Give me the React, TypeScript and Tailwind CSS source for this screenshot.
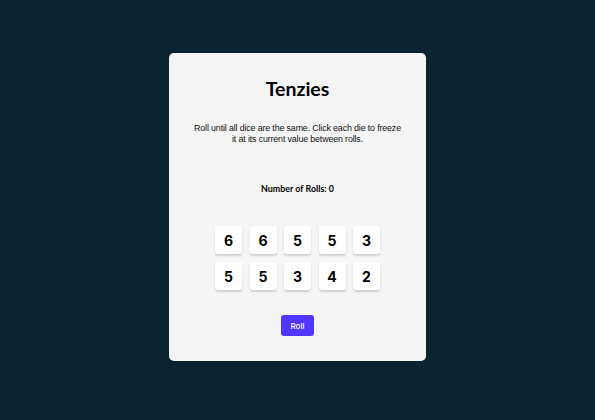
import React from "react";

const dice = [6, 6, 5, 5, 3, 5, 5, 3, 4, 2];

export default function App() {
  return (
    <div className="w-[595px] h-[420px] bg-[#0B2434] pt-[53px]">
      <main className="mx-auto w-[257px] h-[308px] bg-[#F5F5F5] rounded-[5px] flex flex-col items-center">
        <h1 className="mt-[25px] text-[19.5px] leading-[22px] font-bold text-black [font-family:Lato,sans-serif]">
          Tenzies
        </h1>
        <p className="mt-[23px] w-[210px] text-center text-[8.9px] leading-[10.5px] tracking-[-0.15px] text-[#111] [font-family:'Liberation_Sans',Arial,sans-serif]">
          Roll until all dice are the same. Click each die to freeze it at its current value between rolls.
        </p>
        <p className="mt-[39px] text-[8.9px] leading-[12px] font-bold text-black [font-family:Lato,sans-serif]">
          Number of Rolls: 0
        </p>
        <div className="mt-[31px] grid grid-cols-5 gap-x-[7.5px] gap-y-[8px]">
          {dice.map((d, i) => (
            <button
              key={i}
              className="w-[27px] h-[28px] bg-white rounded-[3px] shadow-[0_2px_2px_rgba(0,0,0,0.15)] flex items-center justify-center text-[14px] font-bold text-black [font-family:Inter,sans-serif]"
            >
              {d}
            </button>
          ))}
        </div>
        <button className="mt-[25px] w-[33px] h-[21px] bg-[#5035FF] rounded-[3px] text-white text-[8px] font-medium [font-family:Inter,sans-serif]">
          Roll
        </button>
      </main>
    </div>
  );
}
